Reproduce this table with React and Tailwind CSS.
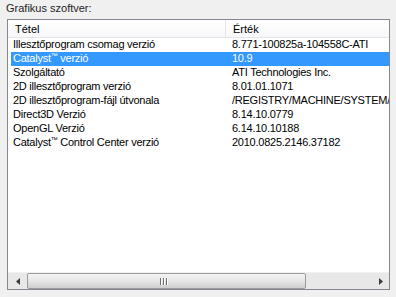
import React from 'react';

const rows = [
  { name: 'Illesztőprogram csomag verzió', value: '8.771-100825a-104558C-ATI' },
  { name: 'Catalyst', tm: true, after: ' verzió', value: '10.9', selected: true },
  { name: 'Szolgáltató', value: 'ATI Technologies Inc.' },
  { name: '2D illesztőprogram verzió', value: '8.01.01.1071' },
  { name: '2D illesztőprogram-fájl útvonala', value: '/REGISTRY/MACHINE/SYSTEM/ControlSet001/Control/Class' },
  { name: 'Direct3D Verzió', value: '8.14.10.0779' },
  { name: 'OpenGL Verzió', value: '6.14.10.10188' },
  { name: 'Catalyst', tm: true, after: ' Control Center verzió', value: '2010.0825.2146.37182' },
];

const Name = ({ row }) => {
  if (!row.tm) return row.name;
  return (
    <>
      {row.name}
      <span className="text-[7px] align-top leading-none">™</span>
      {row.after}
    </>
  );
};

export default function App() {
  return (
    <div
      className="w-[396px] h-[297px] bg-[#f0f0f0] text-[11px] text-black overflow-hidden"
      style={{ fontFamily: '"Liberation Sans", Arial, sans-serif' }}
    >
      <div className="pl-[6px] pt-[1px] h-[19px] leading-[14px] text-[#1e1e1e]">Grafikus szoftver:</div>

      <div className="ml-[7px] w-[383px] h-[271px] border border-[#828790] bg-white flex flex-col">
        {/* header */}
        <div className="h-[18px] flex border-b border-[#e5e5e5] bg-gradient-to-b from-white to-[#f7f8fa] leading-[18px]">
          <div className="w-[218px] pl-[7px] border-r border-[#e5e5e5]">Tétel</div>
          <div className="pl-[7px]">Érték</div>
        </div>

        {/* rows */}
        <div className="flex-1 tracking-[-0.25px]">
          {rows.map((row, i) => (
            <div
              key={i}
              className={
                'ml-[3px] h-[14px] flex leading-[13px] whitespace-nowrap ' +
                (row.selected ? 'bg-[#3399ff] text-white' : '')
              }
            >
              <div className="w-[215px] pl-[2px] overflow-hidden">
                <Name row={row} />
              </div>
              <div className="flex-1 pl-[6px] overflow-hidden">{row.value}</div>
            </div>
          ))}
        </div>

        {/* horizontal scrollbar */}
        <div className="h-[17px] flex bg-[#e8e8e8] border-t border-[#f0f0f0]">
          <div className="w-[19px] flex items-center justify-center">
            <svg width="4" height="7" viewBox="0 0 4 7">
              <path d="M4 0 L0 3.5 L4 7 Z" fill="#3c3c3c" />
            </svg>
          </div>
          <div className="w-[279px] h-[16px] rounded-[2px] border border-[#9a9a9a] bg-gradient-to-b from-[#f4f4f4] via-[#e6e6e6] to-[#cfcfcf] flex items-center justify-center">
            <div className="flex gap-[1px] ml-[-6px]">
              <div className="w-[2px] h-[7px] bg-[#6e6e6e] border-r border-white" />
              <div className="w-[2px] h-[7px] bg-[#6e6e6e] border-r border-white" />
              <div className="w-[2px] h-[7px] bg-[#6e6e6e] border-r border-white" />
            </div>
          </div>
          <div className="flex-1 flex items-center justify-end pr-[6px]">
            <svg width="4" height="7" viewBox="0 0 4 7">
              <path d="M0 0 L4 3.5 L0 7 Z" fill="#3c3c3c" />
            </svg>
          </div>
        </div>
      </div>
    </div>
  );
}
